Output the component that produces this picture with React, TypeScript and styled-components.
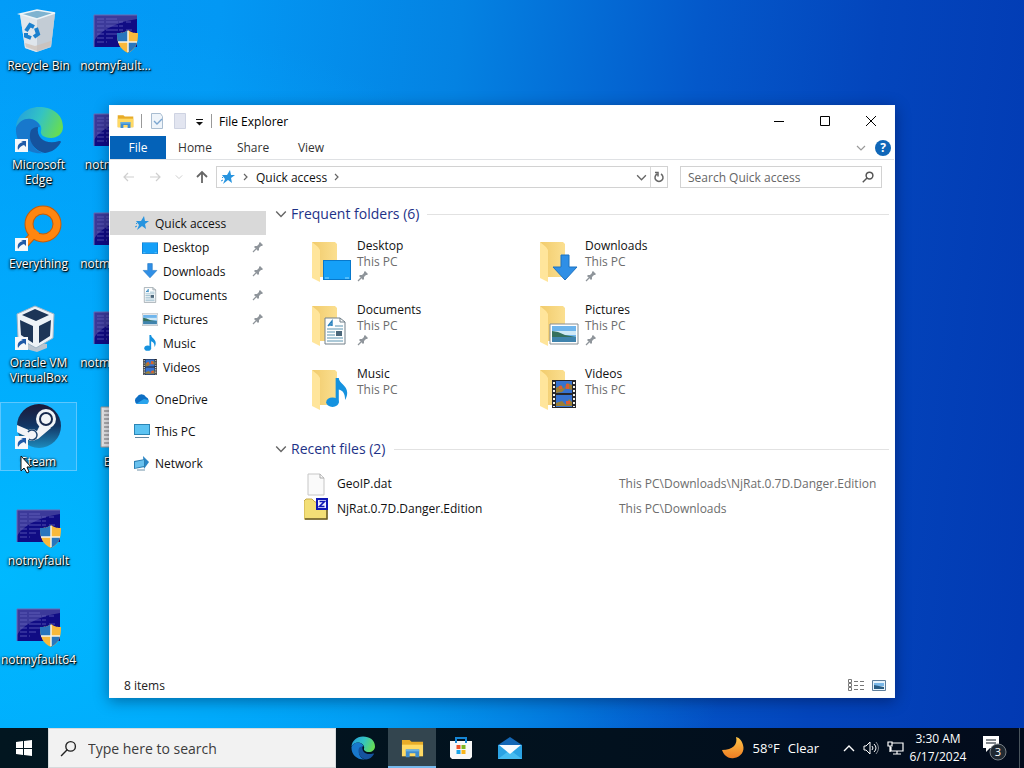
import React from "react";
import styled, { createGlobalStyle, css } from "styled-components";

const GlobalStyle = createGlobalStyle`
  *, *::before, *::after { box-sizing: border-box; }
  body { margin: 0; }
  body, button, input { font-family: "Open Sans", "Noto Sans", sans-serif; font-size: 12px; }
  button { border: 0; padding: 0; background: none; color: inherit; cursor: default; }
  h2, ul, p { margin: 0; padding: 0; font-weight: 400; }
  ul { list-style: none; }
  a { color: inherit; text-decoration: none; }
  svg { display: block; flex: none; }
`;

const Screen = styled.div`
  min-height: 100vh;
  display: flex;
  flex-direction: column;
  background:
    radial-gradient(ellipse 72% 75% at 0% 75%, rgba(0, 186, 255, 0.95), rgba(0, 176, 255, 0.7) 45%, rgba(0, 160, 250, 0) 100%),
    linear-gradient(96deg, #029cf8 0%, #0398f4 20%, #0482e2 42%, #0458ca 64%, #0345bc 80%, #0239b2 100%);
`;

const Desktop = styled.main`
  flex: 1;
  position: relative;
  min-height: 700px;
  padding: 6px 0;
  overflow: hidden;
`;

const Shortcuts = styled.div`
  display: grid;
  grid-auto-flow: column;
  grid-template-rows: repeat(7, 99px);
  grid-auto-columns: 77px;
  justify-content: start;
`;

const Shortcut = styled.button<{ $hot?: boolean }>`
  align-self: start;
  min-height: 69px;
  display: flex;
  flex-direction: column;
  align-items: center;
  gap: 3px;
  border: 1px solid transparent;
  color: #fff;
  font-size: 12px;
  line-height: 15px;
  text-shadow: 1px 1px 1px #000, 0 1px 3px #000, 0 0 2px rgba(0, 0, 0, 0.7);
  ${(p) => p.$hot && css`
    background: rgba(120, 200, 255, 0.2);
    border-color: rgba(150, 215, 255, 0.55);
  `}
`;

const ShortcutLabel = styled.span`
  max-width: 76px;
  white-space: pre-line;
`;

const Cursor = styled.svg`
  position: absolute;
  left: 20px;
  top: 455px;
`;

const Window = styled.section`
  position: absolute;
  left: 109px;
  right: 129px;
  top: 105px;
  bottom: 30px;
  display: flex;
  flex-direction: column;
  background: #fff;
  color: #111;
  border: 1px solid #fafcff;
  box-shadow: 0 3px 14px rgba(0, 0, 30, 0.4);
`;

const TitleBar = styled.header`
  height: 30px;
  display: flex;
  align-items: center;
  gap: 7px;
  padding-left: 7px;
  color: #000;
`;

const TitleTools = styled.div`
  display: flex;
  align-items: center;
  gap: 7px;
`;

const Separator = styled.span`
  width: 1px;
  height: 14px;
  background: #999;
`;

const WindowButtons = styled.div`
  display: flex;
  margin-left: auto;
`;

const WindowButton = styled.button`
  width: 46px;
  height: 30px;
  display: grid;
  place-items: center;
`;

const Ribbon = styled.nav`
  height: 24px;
  display: flex;
  align-items: stretch;
  border-bottom: 1px solid #dfe1e4;
`;

const RibbonTab = styled.button<{ $main?: boolean }>`
  width: ${(p) => (p.$main ? 56 : 58)}px;
  color: ${(p) => (p.$main ? "#fff" : "#333")};
  background: ${(p) => (p.$main ? "#0462b8" : "none")};
`;

const RibbonEnd = styled.div`
  display: flex;
  align-items: center;
  gap: 9px;
  margin-left: auto;
  padding-right: 3px;
`;

const HelpButton = styled.button`
  width: 16px;
  height: 16px;
  border-radius: 50%;
  background: #1067b8;
  color: #fff;
  font-weight: 700;
  line-height: 16px;
`;

const NavRow = styled.div`
  display: flex;
  align-items: center;
  height: 34px;
  padding: 0 12px 0 10px;
`;

const NavButtons = styled.div`
  display: flex;
  align-items: center;
  width: 96px;
  gap: 11px;
  padding-left: 1px;
`;

const Address = styled.div`
  flex: 1;
  height: 22px;
  display: flex;
  align-items: center;
  gap: 5px;
  padding-left: 3px;
  border: 1px solid #d2d2d2;
`;

const AddressEnd = styled.div`
  display: flex;
  align-items: center;
  align-self: stretch;
  gap: 3px;
  margin-left: auto;
`;

const Refresh = styled.button`
  width: 17px;
  align-self: stretch;
  border-left: 1px solid #d8d8d8;
  display: grid;
  place-items: center;
`;

const SearchBox = styled.label`
  width: 202px;
  height: 22px;
  margin-left: 12px;
  padding: 0 7px;
  display: flex;
  align-items: center;
  border: 1px solid #d2d2d2;
`;

const SearchInput = styled.input`
  flex: 1;
  min-width: 0;
  border: 0;
  padding: 0;
  outline: 0;
  background: none;
  color: #555;
  &::placeholder { color: #666; opacity: 1; }
`;

const Body = styled.div`
  flex: 1;
  display: flex;
  min-height: 0;
`;

const Sidebar = styled.nav`
  width: 156px;
  padding-top: 17px;
`;

const SideItem = styled.a<{ $level?: boolean; $active?: boolean; $spaced?: boolean }>`
  height: 24px;
  margin-top: ${(p) => (p.$spaced ? 8 : 0)}px;
  padding-left: ${(p) => (p.$level ? 32 : 24)}px;
  display: flex;
  align-items: center;
  gap: 5px;
  color: #111;
  background: ${(p) => (p.$active ? "#d9d9d9" : "none")};
`;

const PinSlot = styled.span`
  margin-left: auto;
  padding-right: 2px;
`;

const Content = styled.div`
  flex: 1;
  min-width: 0;
  padding: 10px 5px 0 9px;
`;

const SectionHead = styled.h2`
  height: 20px;
  display: flex;
  align-items: center;
  gap: 4px;
  font-size: 14px;
  line-height: 20px;
  color: #1e3287;
  white-space: nowrap;
  &::after {
    content: "";
    flex: 1;
    height: 1px;
    margin-left: 4px;
    background: #e2e2e2;
  }
`;

const Tiles = styled.ul`
  display: grid;
  grid-template-columns: repeat(2, 228px);
  grid-auto-rows: 64px;
  margin: 10px 0 13px 36px;
`;

const Tile = styled.li`
  display: flex;
  align-items: flex-start;
  gap: 4px;
  padding-top: 4px;
`;

const TileText = styled.div`
  display: flex;
  flex-direction: column;
  line-height: 16px;
  color: #111;
`;

const Muted = styled.span`
  color: #6d6d6d;
`;

const Recent = styled.table`
  width: 100%;
  margin-top: 12px;
  border-collapse: collapse;
  td { height: 25px; padding: 0; white-space: nowrap; }
  td:first-child { width: 344px; padding-left: 29px; }
`;

const FileName = styled.a`
  display: flex;
  align-items: center;
  gap: 9px;
  color: #111;
`;

const StatusBar = styled.footer`
  height: 24px;
  display: flex;
  align-items: center;
  gap: 8px;
  padding: 0 8px 0 14px;
  color: #222;
  span { margin-right: auto; }
`;

const Taskbar = styled.footer`
  height: 40px;
  display: flex;
  align-items: stretch;
  background: linear-gradient(90deg, #021620, #02111e 60%, #020b1c);
  color: #fff;
`;

const TaskButton = styled.button<{ $active?: boolean }>`
  width: 48px;
  display: grid;
  place-items: center;
  background: ${(p) => (p.$active ? "#33454f" : "none")};
  border-bottom: 2px solid ${(p) => (p.$active ? "#76b9ed" : "transparent")};
  border-top: 2px solid transparent;
`;

const TaskSearch = styled.label`
  width: 288px;
  display: flex;
  align-items: center;
  gap: 11px;
  padding: 0 12px 0 11px;
  background: #f2f2f2;
  border: 1px solid #d6dadc;
  input { font-size: 14px; }
  input::placeholder { color: #3c3c3c; }
`;

const TaskApps = styled.div`
  display: flex;
  gap: 1px;
  padding-left: 3px;
`;

const Tray = styled.div`
  display: flex;
  align-items: stretch;
  margin-left: auto;
`;

const Weather = styled.button`
  display: flex;
  align-items: center;
  gap: 8px;
  font-size: 13px;
  padding-right: 24px;
`;

const TrayIcons = styled.div`
  display: flex;
  align-items: center;
  gap: 8px;
`;

const Clock = styled.button`
  width: 68px;
  line-height: 18px;
  font-size: 12px;
`;

const Notices = styled.button`
  width: 48px;
  padding-left: 9px;
  border-right: 1px solid #49545c;
  margin-right: 4px;
`;

/* ---------- icons ---------- */

const ShortcutArrow = () => (
  <g>
    <path d="M0 33h13v13H0z" fill="#f5f8fb" />
    <path d="M3 44c-1-5 1-7 5-8l-2-1h5v6l-2-2c-3 1-4 2-6 5z" fill="#1f5aa8" />
  </g>
);

const EdgeIcon = ({ size, arrow }: { size: number; arrow?: boolean }) => (
  <svg width={size} height={size} viewBox="0 0 48 48">
    <defs>
      <linearGradient id="edgeTop" x1="0" x2="1" y1="0.2" y2="0.5">
        <stop offset="0" stopColor="#249fdd" />
        <stop offset="0.5" stopColor="#33c3c4" />
        <stop offset="1" stopColor="#66dc55" />
      </linearGradient>
    </defs>
    <path d="M24 1C11 1 2 10 1 21c5-8 14-10 20-6 5 3 6 7 5 10-1 3 2 7 10 7 6 0 12-4 12-11C48 8 37 1 24 1z" fill="url(#edgeTop)" />
    <path d="M1 22c3-7 9-10 15-9 5 1 9 5 9 8-5 0-9 5-9 11 0 8 6 14 13 15C13 49 0 38 1 22z" fill="#1878cc" />
    <path d="M16 24c-4 10 3 21 14 23 7-1 12-4 16-11 0-1-1-1-2-1-12 4-23-2-21-14-3 0-5 1-7 3z" fill="#15539e" />
    {arrow && <ShortcutArrow />}
  </svg>
);

const BinIcon = () => (
  <svg width="48" height="48" viewBox="0 0 48 48">
    <path d="M5 7l17-4 18 3-4 34-15 5-11-4z" fill="#cfd9e2" />
    <path d="M5 7l17 4 0 34-12-4z" fill="#dfe6ec" />
    <path d="M22 11l18-5-4 34-14 5z" fill="#c3ccd5" />
    <path d="M5 7l17-4 18 3-18 6z" fill="#7fb3d0" stroke="#edf4f8" strokeWidth="1.5" />
    <path d="M10 36l10 3 16-5-1 5-13 5-11-4z" fill="#cdbfb5" opacity=".7" />
    <g fill="none" stroke="#1a80ce" strokeWidth="4">
      <path d="M11 24l4-6 4 2" />
      <path d="M21 21l2 6-4 3" />
      <path d="M16 31l-5-2 0-3" />
    </g>
  </svg>
);

const CrashIcon = () => (
  <svg width="48" height="48" viewBox="0 0 48 48">
    <path d="M2 8h43v32H2z" fill="#100c84" />
    <path d="M2 8h43v4C24 15 8 24 2 34z" fill="#3c3a9a" />
    <path d="M2 40V8h43" fill="none" stroke="#6b6bb4" />
    <g stroke="#6d6ac4" strokeWidth="1" strokeDasharray="7 2 12 1 4 3" opacity=".7">
      <path d="M5 12h20M5 15h34M5 19h27M5 23h35M5 27h30M5 31h16M5 35h10" />
    </g>
    <path d="M36 23c4 3 7 3 10 3 0 11-2 16-10 20-8-4-11-9-11-20 4 0 7 0 11-3z" fill="#f8b93c" />
    <path d="M36 23c-4 3-7 3-11 3 0 4 0 6 1 9h10zM36 35h9c-1 5-4 8-9 11z" fill="#2876bd" />
    <path d="M36 24v21M26 35h19" stroke="#f3f3e8" strokeWidth="1.5" />
  </svg>
);

const EverythingIcon = () => (
  <svg width="48" height="48" viewBox="0 0 48 48">
    <path d="M21 27L9 40" stroke="#c25d0b" strokeWidth="8" />
    <circle cx="28" cy="19" r="14" fill="none" stroke="#c25d0b" strokeWidth="9" />
    <path d="M22 26L9 40" stroke="#ff860f" strokeWidth="6" />
    <circle cx="28" cy="19" r="14" fill="none" stroke="#ff860f" strokeWidth="7" />
    <ShortcutArrow />
  </svg>
);

const BoxIcon = () => (
  <svg width="48" height="48" viewBox="0 0 48 48">
    <path d="M11 41l9-3 12 2v4l-10 4-11-3z" fill="#bac4cf" />
    <path d="M2 10L20 2l19 8-1 24-17 10L3 34z" fill="#edf2f7" stroke="#9fb4c6" />
    <path d="M7 11l13-6 14 6-13 6zM5 16l13 6v17L6 31zM24 22l12-6-1 16-11 7z" fill="#1d3557" />
    <ShortcutArrow />
  </svg>
);

const SteamIcon = () => (
  <svg width="48" height="48" viewBox="0 0 48 48">
    <defs>
      <linearGradient id="steam" x2="0" y2="1">
        <stop stopColor="#1b1838" />
        <stop offset=".5" stopColor="#123765" />
        <stop offset="1" stopColor="#1d8abc" />
      </linearGradient>
    </defs>
    <circle cx="24" cy="23" r="22" fill="url(#steam)" />
    <path d="M2 22l14 6 6 0 4-8 10 5-13 11-5 1c-2-2-9-4-16-8z" fill="#f2f4f7" />
    <circle cx="31" cy="16" r="10" fill="#f2f4f7" />
    <circle cx="31" cy="16" r="7" fill="#17294d" />
    <circle cx="31" cy="16" r="5" fill="#f2f4f7" />
    <circle cx="17" cy="32" r="6" fill="#f2f4f7" />
    <path d="M13 29a5 5 0 1 1 1 7" fill="none" stroke="#1d4570" strokeWidth="1.500" />
    <ShortcutArrow />
  </svg>
);

const ListFileIcon = () => (
  <svg width="48" height="48" viewBox="0 0 48 48">
    <path d="M9 4h32v40H9z" fill="#eee" stroke="#999" />
    <path d="M12 8h25M12 12h25M12 16h25M12 20h25M12 24h25M12 28h25M12 32h25M12 36h25M12 40h25" stroke="#777" />
  </svg>
);

const Chevron = ({ dir = "down", color = "#666", size = 10 }: { dir?: "down" | "right" | "up"; color?: string; size?: number }) => {
  const d = { down: "M1 3l4 4 4-4", right: "M3 2l3 3-3 3", up: "M1 7l4-4 4 4" }[dir];
  return (
    <svg width={size} height={size} viewBox="0 0 10 10" fill="none" stroke={color} strokeWidth="1.2">
      <path d={d} />
    </svg>
  );
};

const ArrowIcon = ({ dir, color }: { dir: "left" | "right" | "up"; color: string }) => {
  const d = { left: "M13 8H3M7 4L3 8l4 4", right: "M2 8h10M8 4l4 4-4 4", up: "M8 14V3M3 8l5-5 5 5" }[dir];
  return (
    <svg width="16" height="16" viewBox="0 0 16 16" fill="none" stroke={color} strokeWidth={dir === "up" ? 1.8 : 1.2}>
      <path d={d} />
    </svg>
  );
};

const StarIcon = () => (
  <svg width="16" height="16" viewBox="0 0 16 16">
    <path d="M10 1l1 5 4 0-4 3 1 5-4-3-5 4 2-5-3-4 5 0z" fill="#2794df" />
    <path d="M1 12l2-1M2 9l1-1" stroke="#2794df" />
  </svg>
);

const Magnifier = ({ size, color, weight = 1.3 }: { size: number; color: string; weight?: number }) => (
  <svg width={size} height={size} viewBox="0 0 16 16" fill="none" stroke={color} strokeWidth={weight}>
    <circle cx="10" cy="6" r="4.5" />
    <path d="M7 9l-6 6" />
  </svg>
);

const PinIcon = () => (
  <svg width="12" height="12" viewBox="0 0 12 12">
    <path d="M8 1l3 3-1 1-1 0-2 2 0 2-1 1-4-4 1-1 2 0 2-2 0-1z" fill="#8f959b" />
    <path d="M4 8l-3 3" stroke="#8f959b" strokeWidth="1.200" />
  </svg>
);

const ExplorerIcon = ({ size }: { size: number }) => (
  <svg width={size} height={size} viewBox="0 0 24 24">
    <path d="M1 3h8l2 2h12v15H1z" fill="#e8ac28" />
    <path d="M1 8h22v12H1z" fill="#ffda64" />
    <path d="M5 13h14v8h-4v-4H9v4H5z" fill="#3f8dd0" />
    <path d="M5 13h14v2H5z" fill="#68b1e5" />
  </svg>
);

type Kind = "desktop" | "downloads" | "documents" | "pictures" | "music" | "videos";

/* Each badge is drawn on a 28x28 field. */
const badges: Record<Kind, React.ReactNode> = {
  desktop: (
    <>
      <path d="M0 6h28v20H0z" fill="#0878cb" />
      <path d="M1 7h26v18H1z" fill="#15a0f8" />
      <path d="M2 24h4M22 24h4" stroke="#8edaff" />
    </>
  ),
  downloads: <path d="M10 1h8v12h8L14 26 2 13h8z" fill="#2f8fe6" stroke="#1d72c0" strokeWidth="1" />,
  documents: (
    <>
      <path d="M4 1h15l5 4v22H4z" fill="#fdfefe" stroke="#72808a" />
      <path d="M19 1v4h5" fill="none" stroke="#72808a" />
      <path d="M14 9h8M6 12h16M6 15h8M6 18h8M6 21h16M6 24h16" stroke="#5b93b0" />
      <path d="M7 9l4-5 0 5M8 8h3" stroke="#2780bd" strokeWidth="1.400" fill="none" />
      <path d="M15 14h6v5h-6z" fill="#4d687b" />
    </>
  ),
  pictures: (
    <>
      <path d="M0 5h28v20H0z" fill="#fff" stroke="#858d93" />
      <path d="M2 7h24v16H2z" fill="#6fb5ec" />
      <path d="M2 12h24v4H2z" fill="#cfe8f6" />
      <path d="M2 12l6 1 7 3 11 2v1H2z" fill="#35705e" />
      <path d="M2 18h24v5H2z" fill="#3f83ad" />
    </>
  ),
  music: (
    <>
      <ellipse cx="10" cy="23" rx="6" ry="4.500" fill="#1592df" />
      <path d="M13 23V0h3c0 5 8 7 8 14 0 3-1 5-2 7 0-6-2-9-6-10v12z" fill="#1592df" />
    </>
  ),
  videos: (
    <>
      <path d="M2 0h24v28H2z" fill="#26262b" />
      <path d="M6 1h16v12H6zM6 15h16v12H6z" fill="#3772cf" />
      <path d="M6 8l5-3 3 4 3-6 5 2v5l-6-2-4 4-6 1zM6 23l6-2 4 4 3-6 3 3v4H6z" fill="#9b7e34" />
      <path d="M16 4h3v5h-3zM9 6h3v3H9zM16 21h4v3h-4z" fill="#df5b35" />
      <path d="M4 2v25M24 2v25" stroke="#f4f4ec" strokeWidth="2" strokeDasharray="2 2" />
    </>
  ),
};

const SmallKind = ({ kind }: { kind: Kind }) => (
  <svg width="16" height="16" viewBox="0 0 28 28">{badges[kind]}</svg>
);

const BADGE_SPOT: Record<Kind, string> = {
  desktop: "translate(12 16)",
  downloads: "translate(12 16)",
  documents: "translate(10 15)",
  pictures: "translate(11 17)",
  music: "translate(11 12) scale(1.050)",
  videos: "translate(11 14)",
};

const FolderTile = ({ kind }: { kind: Kind }) => (
  <svg width="42" height="46" viewBox="0 0 42 46">
    <defs>
      <linearGradient id="folder" x2="1" y2="0">
        <stop stopColor="#f1cb6c" />
        <stop offset="1" stopColor="#fbdf90" />
      </linearGradient>
    </defs>
    <path d="M1 4h23l2 2v33H9z" fill="url(#folder)" />
    <path d="M1 4l6 5 2 3v32l-8-4z" fill="#ffe59b" />
    <g transform={BADGE_SPOT[kind]}>{badges[kind]}</g>
  </svg>
);

const CloudIcon = () => (
  <svg width="16" height="16" viewBox="0 0 16 16">
    <path d="M3 13a4 4 0 0 1 0-7 5 5 0 0 1 9 0 4 4 0 0 1 1 7z" fill="#0e6fc4" />
    <path d="M2 13l8-5 4 1a3 3 0 0 1-1 4z" fill="#2aa4ec" />
  </svg>
);

const ComputerIcon = () => (
  <svg width="16" height="16" viewBox="0 0 16 16">
    <path d="M0 1h16v11H0z" fill="#2b85b5" />
    <path d="M1 2h14v9H1z" fill="#5cc3f2" />
    <path d="M1 14.500h14" stroke="#6386a0" />
  </svg>
);

const NetworkIcon = () => (
  <svg width="16" height="16" viewBox="0 0 16 16">
    <path d="M9 1l6 6-5 7z" fill="#2a86c6" />
    <path d="M0 6l11-2v8L0 14z" fill="#2c7fb2" />
    <path d="M1 7l9-2v6l-9 2z" fill="#69c1ee" />
    <path d="M3 15h8" stroke="#6e91a8" />
  </svg>
);

const BlankFile = () => (
  <svg width="24" height="24" viewBox="0 0 24 24">
    <path d="M4 2h12l4 4v17H4z" fill="#fafafa" stroke="#c6c6c6" />
    <path d="M16 2v4h4" fill="none" stroke="#aaa" />
  </svg>
);

const ArchiveFile = () => (
  <svg width="24" height="24" viewBox="0 0 24 24">
    <path d="M0 4l2-2h6l3 3h12v17H0z" fill="#f3df76" stroke="#c5a94a" />
    <path d="M1 22h22V8" fill="none" stroke="#695c28" strokeWidth="1.500" />
    <path d="M13 2h10v10H13z" fill="#eef" stroke="#1018b5" strokeWidth="2" />
    <path d="M15.500 4.500h5l-5 5h5" fill="none" stroke="#1018b5" strokeWidth="1.600" />
  </svg>
);

const StoreIcon = () => (
  <svg width="24" height="24" viewBox="0 0 24 24">
    <path d="M1 5h22v16l-2 2H3l-2-2z" fill="#f7f7f7" />
    <path d="M7 7V2h10v5" fill="none" stroke="#1686d5" strokeWidth="2" />
    <path d="M7.500 9h4v4h-4z" fill="#ee5127" />
    <path d="M12.500 9h4v4h-4z" fill="#7eb51f" />
    <path d="M7.500 14h4v4h-4z" fill="#1aa4e8" />
    <path d="M12.500 14h4v4h-4z" fill="#fab51a" />
  </svg>
);

const MailIcon = () => (
  <svg width="24" height="24" viewBox="0 0 24 24">
    <path d="M0 9l12-8 12 8v4H0z" fill="#1467b5" />
    <path d="M0 9h24v14H0z" fill="#2ba3e4" />
    <path d="M0 23l12-9 12 9z" fill="#47bdf2" />
    <path d="M1 9h22l-11 9z" fill="#f8fbfe" />
  </svg>
);

/* ---------- data ---------- */

const shortcuts: { label: string; icon: React.ReactNode; hot?: boolean }[] = [
  { label: "Recycle Bin", icon: <BinIcon /> },
  { label: "Microsoft\nEdge", icon: <EdgeIcon size={48} arrow /> },
  { label: "Everything", icon: <EverythingIcon /> },
  { label: "Oracle VM\nVirtualBox", icon: <BoxIcon /> },
  { label: "Steam", icon: <SteamIcon />, hot: true },
  { label: "notmyfault", icon: <CrashIcon /> },
  { label: "notmyfault64", icon: <CrashIcon /> },
  { label: "notmyfault…", icon: <CrashIcon /> },
  { label: "notmyfault", icon: <CrashIcon /> },
  { label: "notmyfault…", icon: <CrashIcon /> },
  { label: "notmyfault…", icon: <CrashIcon /> },
  { label: "Eula", icon: <ListFileIcon /> },
];

const places: { label: string; kind: Kind; pinned?: boolean }[] = [
  { label: "Desktop", kind: "desktop", pinned: true },
  { label: "Downloads", kind: "downloads", pinned: true },
  { label: "Documents", kind: "documents", pinned: true },
  { label: "Pictures", kind: "pictures", pinned: true },
  { label: "Music", kind: "music" },
  { label: "Videos", kind: "videos" },
];

const recent = [
  { name: "GeoIP.dat", path: "This PC\\Downloads\\NjRat.0.7D.Danger.Edition", icon: <BlankFile /> },
  { name: "NjRat.0.7D.Danger.Edition", path: "This PC\\Downloads", icon: <ArchiveFile /> },
];

const ExplorerWindow = () => (
  <Window aria-label="File Explorer">
    <TitleBar>
      <TitleTools>
        <ExplorerIcon size={17} />
        <Separator />
        <svg width="16" height="16" viewBox="0 0 16 16">
          <path d="M2.500.500h9l2 3v12h-11z" fill="#eef4fa" stroke="#a9bdd1" />
          <path d="M5 8l3 3 5-5" stroke="#7ba6d0" strokeWidth="1.400" fill="none" />
        </svg>
        <svg width="16" height="16" viewBox="0 0 16 16">
          <path d="M2.500.500h11v15h-11z" fill="#e2e5f0" stroke="#ced3e2" />
        </svg>
        <svg width="9" height="16" viewBox="0 0 9 16">
          <path d="M1 6.500h7" stroke="#111" />
          <path d="M1 9h7l-3.500 3.500z" fill="#111" />
        </svg>
        <Separator />
      </TitleTools>
      <span>File Explorer</span>
      <WindowButtons>
        <WindowButton aria-label="Minimize">
          <svg width="10" height="11"><path d="M0 5.500h10" stroke="#000" /></svg>
        </WindowButton>
        <WindowButton aria-label="Maximize">
          <svg width="10" height="10"><path d="M.5.500h9v9H.5z" fill="none" stroke="#000" /></svg>
        </WindowButton>
        <WindowButton aria-label="Close">
          <svg width="12" height="12"><path d="M1 1l10 10M11 1L1 11" stroke="#000" /></svg>
        </WindowButton>
      </WindowButtons>
    </TitleBar>
    <Ribbon>
      <RibbonTab $main>File</RibbonTab>
      <RibbonTab>Home</RibbonTab>
      <RibbonTab>Share</RibbonTab>
      <RibbonTab>View</RibbonTab>
      <RibbonEnd>
        <Chevron color="#9a9a9a" />
        <HelpButton aria-label="Help">?</HelpButton>
      </RibbonEnd>
    </Ribbon>
    <NavRow>
      <NavButtons>
        <ArrowIcon dir="left" color="#cfcfcf" />
        <ArrowIcon dir="right" color="#cfcfcf" />
        <Chevron color="#ccc" size={8} />
        <ArrowIcon dir="up" color="#666" />
      </NavButtons>
      <Address>
        <StarIcon />
        <Chevron dir="right" />
        <span>Quick access</span>
        <Chevron dir="right" />
        <AddressEnd>
          <Chevron size={11} />
          <Refresh aria-label="Refresh">
            <svg width="12" height="12" viewBox="0 0 12 12" fill="none" stroke="#666" strokeWidth="1.500">
              <path d="M8 3a4 4 0 1 1-4 0M2 1.500h3v4" />
            </svg>
          </Refresh>
        </AddressEnd>
      </Address>
      <SearchBox>
        <SearchInput placeholder="Search Quick access" aria-label="Search Quick access" />
        <Magnifier size={12} color="#555" weight={2} />
      </SearchBox>
    </NavRow>
    <Body>
      <Sidebar>
        <SideItem href="#quick" $active><StarIcon />Quick access</SideItem>
        {places.map((p) => (
          <SideItem key={p.label} href={"#" + p.kind} $level>
            <SmallKind kind={p.kind} />
            {p.label}
            {p.pinned && <PinSlot><PinIcon /></PinSlot>}
          </SideItem>
        ))}
        <SideItem href="#onedrive" $spaced><CloudIcon />OneDrive</SideItem>
        <SideItem href="#pc" $spaced><ComputerIcon />This PC</SideItem>
        <SideItem href="#network" $spaced><NetworkIcon />Network</SideItem>
      </Sidebar>
      <Content>
        <SectionHead><Chevron size={12} />Frequent folders (6)</SectionHead>
        <Tiles>
          {places.map((p) => (
            <Tile key={p.label}>
              <FolderTile kind={p.kind} />
              <TileText>
                <span>{p.label}</span>
                <Muted>This PC</Muted>
                {p.pinned && <PinIcon />}
              </TileText>
            </Tile>
          ))}
        </Tiles>
        <SectionHead><Chevron size={12} />Recent files (2)</SectionHead>
        <Recent>
          <tbody>
            {recent.map((r) => (
              <tr key={r.name}>
                <td><FileName href="#file">{r.icon}{r.name}</FileName></td>
                <td><Muted>{r.path}</Muted></td>
              </tr>
            ))}
          </tbody>
        </Recent>
      </Content>
    </Body>
    <StatusBar>
      <span>8 items</span>
      <svg width="16" height="12" viewBox="0 0 16 12" fill="none" stroke="#777">
        <path d="M.5.500h3v3h-3zM.5 4.500h3v3h-3zM.5 8.500h3v3h-3zM6 2.500h4M6 6.500h4M6 10.500h4M12 2.500h4M12 6.500h4M12 10.500h4" />
      </svg>
      <svg width="14" height="11" viewBox="0 0 14 11">
        <path d="M.5.500h13v10H.5z" fill="#e6f3fc" stroke="#5f7f9c" />
        <path d="M2 3h10v3H2z" fill="#79b7e8" />
        <path d="M2 5l5 1 5 1v2H2z" fill="#285c83" />
      </svg>
    </StatusBar>
  </Window>
);

export default function App() {
  return (
    <>
      <GlobalStyle />
      <Screen>
        <Desktop>
          <Shortcuts>
            {shortcuts.map((s, i) => (
              <Shortcut key={i} $hot={s.hot}>
                {s.icon}
                <ShortcutLabel>{s.label}</ShortcutLabel>
              </Shortcut>
            ))}
          </Shortcuts>
          <ExplorerWindow />
          <Cursor width="12" height="19" viewBox="0 0 12 19">
            <path d="M1 1v15l3-3 3 5 2-1-2-5h4z" fill="#fff" stroke="#111" />
          </Cursor>
        </Desktop>
        <Taskbar>
          <TaskButton aria-label="Start">
            <svg width="16" height="16" viewBox="0 0 16 16" fill="#fff">
              <path d="M0 2l7-1v7H0zM8 1l8-1v8H8zM0 9h7v6l-7-1zM8 9h8v7l-8-1z" />
            </svg>
          </TaskButton>
          <TaskSearch>
            <Magnifier size={17} color="#222" />
            <SearchInput placeholder="Type here to search" aria-label="Type here to search" />
          </TaskSearch>
          <TaskApps>
            <TaskButton aria-label="Microsoft Edge"><EdgeIcon size={24} /></TaskButton>
            <TaskButton aria-label="File Explorer" $active><ExplorerIcon size={23} /></TaskButton>
            <TaskButton aria-label="Store"><StoreIcon /></TaskButton>
            <TaskButton aria-label="Mail"><MailIcon /></TaskButton>
          </TaskApps>
          <Tray>
            <Weather>
              <svg width="24" height="24" viewBox="0 0 24 24">
                <defs>
                  <linearGradient id="moon" x2="0" y2="1">
                    <stop stopColor="#ffc64a" />
                    <stop offset="1" stopColor="#ef7d22" />
                  </linearGradient>
                </defs>
                <path d="M15 1c2 7-3 13-14 13 2 6 7 9 12 8 7-1 11-7 9-13-1-4-3-7-7-8z" fill="url(#moon)" />
              </svg>
              <span>58°F</span>
              <span>Clear</span>
            </Weather>
            <TrayIcons>
              <svg width="12" height="8" viewBox="0 0 12 8" fill="none" stroke="#fff" strokeWidth="1.400"><path d="M1 7l5-5 5 5" /></svg>
              <svg width="16" height="16" viewBox="0 0 16 16" fill="none" stroke="#fff">
                <path d="M1 6h2l4-4v12l-4-4H1zM9 6q2 2 0 4M11 4q4 4 0 8" />
                <path d="M13 2q5 6 0 12" opacity=".5" />
              </svg>
              <svg width="17" height="16" viewBox="0 0 17 16" fill="none" stroke="#fff" strokeWidth="1.200">
                <path d="M5 3h11v8H4V7M1 2h4v4H1zM3 6v6M10 11v3M6 14h8" />
              </svg>
            </TrayIcons>
            <Clock>3:30 AM<br />6/17/2024</Clock>
            <Notices aria-label="3 new notifications">
              <svg width="26" height="26" viewBox="0 0 26 26">
                <path d="M2 1h16v12H9l-4 4v-4H2z" fill="#fff" />
                <path d="M5 5h10M5 8h10" stroke="#07121f" strokeWidth="1.200" />
                <circle cx="17" cy="17" r="8" fill="#202932" stroke="#777e84" />
                <text x="17" y="21" fill="#fff" fontSize="11" textAnchor="middle">3</text>
              </svg>
            </Notices>
          </Tray>
        </Taskbar>
      </Screen>
    </>
  );
}
